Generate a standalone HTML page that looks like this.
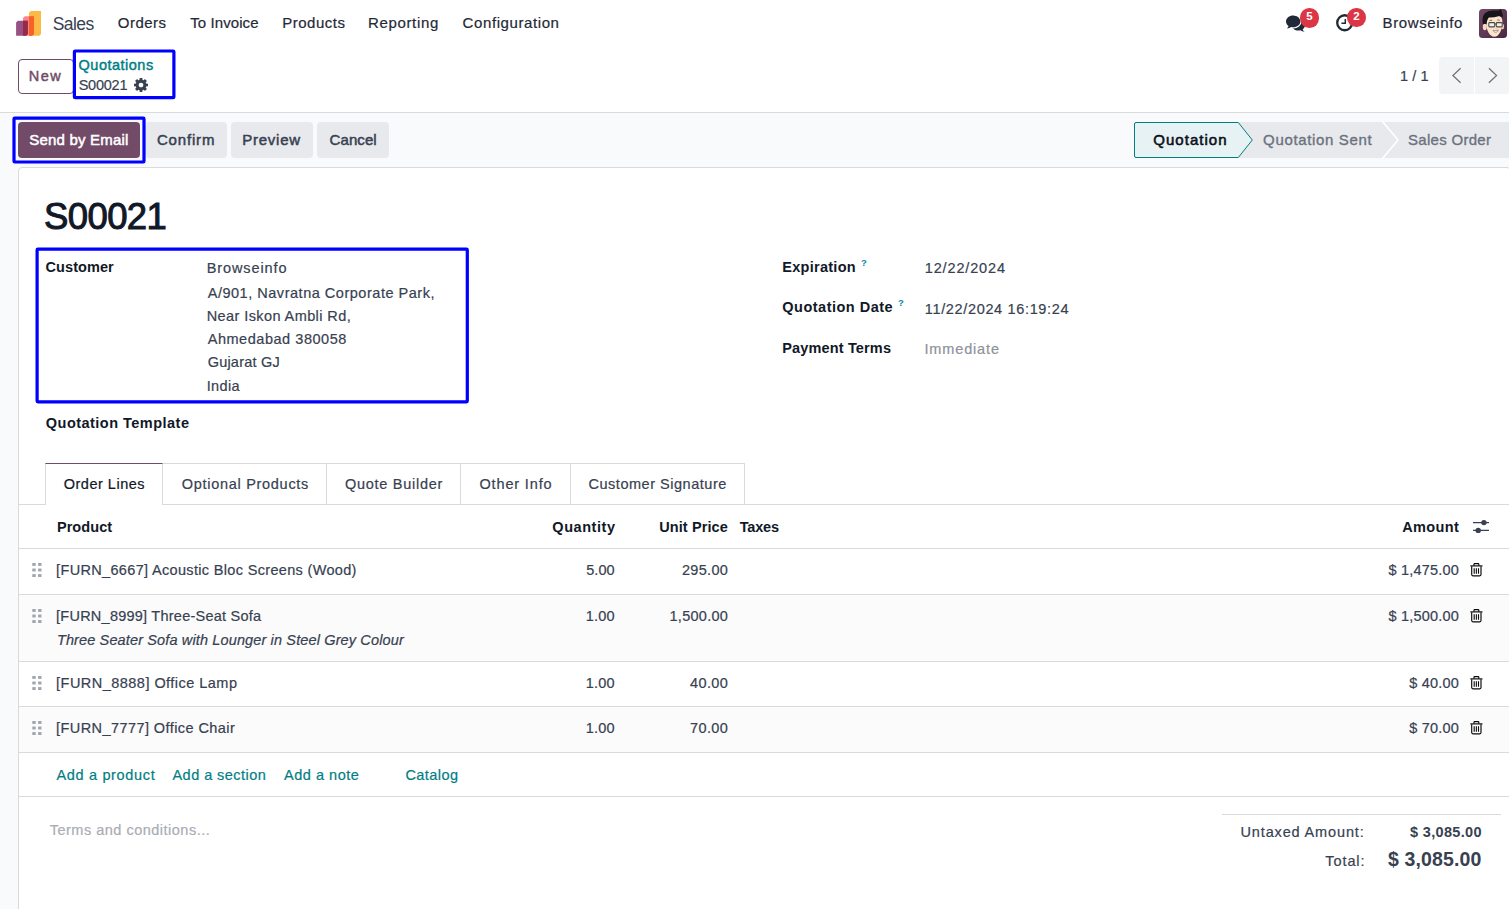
<!DOCTYPE html>
<html lang="en">
<head>
<meta charset="utf-8">
<title>Odoo - S00021</title>
<style>
*{box-sizing:border-box;margin:0;padding:0}
html,body{width:1509px;height:909px;overflow:hidden;background:#f9fafb}
body{font-family:"Liberation Sans","DejaVu Sans",sans-serif;font-size:14.5px;color:#374151;position:relative}
.a{position:absolute}
.t{position:absolute;white-space:nowrap}
#txt{position:absolute;left:0;top:0;width:0;height:0}
#top{position:absolute;left:0;top:0;width:1509px;height:113px;background:#fff;border-bottom:1px solid #d8dadd}
.btn{position:absolute;border-radius:4px}
.sec{background:#e7e9ed}
#sheet{position:absolute;left:18px;top:167px;width:1493px;height:760px;background:#fff;border:1px solid #d8dadd;border-radius:4px 4px 0 0}
.hline{position:absolute;height:1px;background:#d8dadd}
.vline{position:absolute;width:1px;background:#d8dadd}
.stripe{position:absolute;left:19px;width:1490px;background:#fbfbfb}

</style>
</head>
<body>
<div id="top"></div>
<!-- app logo -->
<svg class="a" style="left:16px;top:10px" width="26" height="26" viewBox="0 0 26 26">
  <path d="M14.8 0.9H25V24.0L23.2 25.8H13V2.7z" fill="#fbb945"/>
  <path d="M8.8 6.2H18V24.0L16.2 25.8H7V8.0z" fill="#fc868b"/>
  <path d="M13 6.200H18V24L16.200 25.800H13z" fill="#f86126"/>
  <path d="M1.9 10.8H11.9V24L10.1 25.8H0.1V12.6z" fill="#985184"/>
  <path d="M7 10.800H11.900V24L10.100 25.800H7z" fill="#962b48"/>
</svg>
<!-- systray: chat -->
<svg class="a" style="left:1285px;top:14px" width="22" height="19" viewBox="0 0 22 19">
  <path d="M13.400 6.400c3.700 0 6.600 2.200 6.600 5 0 1.500-.9 2.900-2.300 3.800.3 1 .9 1.800 1.900 2.600-1.700-.1-3.100-.600-4.200-1.500-.6.100-1.300.2-2 .2-3.600 0-6.600-2.300-6.600-5.100s3-5 6.600-5z" fill="#1f2937"/>
  <path d="M8.200 1.500c-4 0-7.200 2.700-7.200 6 0 1.800 1 3.500 2.600 4.600-.3 1-.9 1.800-1.800 2.500 1.700-.1 3.200-.700 4.400-1.500.6.100 1.300.2 2 .2 4 0 7.200-2.600 7.200-5.800s-3.200-6-7.200-6z" fill="#fff" stroke="#fff" stroke-width="2.400"/>
  <path d="M8.200 1.500c-4 0-7.200 2.700-7.200 6 0 1.800 1 3.500 2.600 4.600-.3 1-.9 1.800-1.800 2.500 1.700-.1 3.200-.700 4.400-1.500.6.100 1.300.2 2 .2 4 0 7.200-2.600 7.200-5.800s-3.200-6-7.200-6z" fill="#1f2937"/>
</svg>
<div class="a" style="left:1300px;top:8.200px;width:18.600px;height:19.400px;border-radius:50%;background:#dc3545"></div>
<!-- systray: clock -->
<svg class="a" style="left:1335px;top:13px" width="20" height="20" viewBox="0 0 20 20">
  <circle cx="9.700" cy="9.750" r="7.500" fill="none" stroke="#1f2937" stroke-width="2.300"/>
  <path d="M10.300 5.900v4.400H6.400" fill="none" stroke="#1f2937" stroke-width="1.500"/>
</svg>
<div class="a" style="left:1347.200px;top:8px;width:18.600px;height:19.400px;border-radius:50%;background:#dc3545"></div>
<!-- avatar -->
<svg class="a" style="left:1479px;top:9px" width="28" height="29" viewBox="0 0 28 29">
  <defs>
    <clipPath id="av"><rect x="0" y="0" width="28" height="29" rx="3.500"/></clipPath>
    <linearGradient id="avg" x1="0" y1="0" x2="1" y2="1"><stop offset="0" stop-color="#714a67"/><stop offset="1" stop-color="#4a2842"/></linearGradient>
  </defs>
  <g clip-path="url(#av)">
    <rect width="28" height="29" fill="url(#avg)"/>
    <ellipse cx="5.800" cy="18" rx="2" ry="3.300" fill="#f6d9c2"/>
    <ellipse cx="23.600" cy="17.500" rx="1.500" ry="2.800" fill="#eccbb0"/>
    <path d="M7 12C7 7 11 5.500 15.500 5.500S23.600 7.500 23.400 13c-.100 4-.700 7.500-2.400 10.500-1.500 2.700-3.300 4.300-5.700 4.300s-4.400-1.800-6-4.600C7.800 20.500 7 16.500 7 12z" fill="#fbe3cd"/>
    <path d="M4 15.300C2.800 9 4.200 4.500 8.500 2.800c3-1.300 7.500-1.300 11-1.100 1-.500 1.800-1.300 2.200-1.700.800 1 1.300 2.300 1.200 3.600 1 1.600 1.100 3.300.600 4.800-2-1-3.400-1.200-5-1-2.600.900-5.700 1.300-8.600 1.100C8.400 10 7.800 12.500 7.600 15.500 6.500 14.500 5 14.600 4 15.300z" fill="#161519"/>
    <path d="M10.600 11.600c.800-.500 1.700-.500 2.500-.200M18.300 11.200c.800-.400 1.700-.300 2.400.100" stroke="#3a2a26" stroke-width=".7" fill="none"/>
    <rect x="9.800" y="13.600" width="5.900" height="4.300" rx=".8" fill="#f4efe8" stroke="#4b4a47" stroke-width="1.100"/>
    <rect x="17.300" y="13.600" width="5.900" height="4.300" rx=".8" fill="#f4efe8" stroke="#4b4a47" stroke-width="1.100"/>
    <path d="M15.700 15h1.600" stroke="#4b4a47" stroke-width="1"/>
    <path d="M16.200 19.400c.500.300 1.100.300 1.600 0" stroke="#e5a99a" stroke-width=".7" fill="none"/>
    <path d="M14 21.100c1.700.600 3.700.600 5.400-.200-.300 1.500-1.400 2.300-2.700 2.300S14.300 22.500 14 21.100z" fill="#fff" stroke="#7a5148" stroke-width=".6"/>
  </g>
</svg>

<!-- control panel -->
<div class="btn" style="left:18px;top:58.5px;width:56px;height:35.500px;border:1px solid #714b67;background:#fff"></div>
<!-- gear -->
<svg class="a" style="left:133.500px;top:77.500px" width="14" height="14" viewBox="0 0 1536 1536">
  <path fill="#374151" d="M1024 768q0-106-75-181t-181-75-181 75-75 181 75 181 181 75 181-75 75-181zm512-109v222q0 12-8 23t-20 13l-185 28q-19 54-39 91 35 50 107 138 10 12 10 25t-9 23q-27 37-99 108t-94 71q-12 0-26-9l-138-108q-44 23-91 38-16 136-29 186-7 28-36 28H657q-14 0-24.500-8.500T621 1505l-28-184q-49-16-90-37l-141 107q-10 9-25 9-14 0-25-11-126-114-165-168-7-10-7-23 0-12 8-23 15-21 51-66.500t54-70.500q-27-50-41-99L29 912q-13-2-21-12.500T0 876V654q0-12 8-23t19-13l186-28q14-46 39-92-40-57-107-138-10-12-10-24 0-10 9-23 26-36 98.500-107.500T337 134q13 0 26 10l138 107q44-23 91-38 16-136 29-186 7-28 36-28h222q14 0 24.500 8.500T915 29l28 184q49 16 90 37l142-107q9-9 24-9 13 0 25 10 129 119 165 170 7 8 7 22 0 12-8 23-15 21-51 66.500t-54 70.500q26 50 41 98l183 28q13 2 21 12.500t8 23.500z"/>
</svg>
<!-- pager -->
<div class="a" style="left:1439px;top:57px;width:35px;height:37px;background:#f3f4f6;border-radius:4px 0 0 4px"></div>
<div class="a" style="left:1475px;top:57px;width:34.500px;height:37px;background:#f3f4f6;border-radius:0 4px 4px 0"></div>
<svg class="a" style="left:1450px;top:66px" width="52" height="20" viewBox="0 0 52 20">
  <path d="M10.600 2.200L2.900 9.500l7.700 7.300" fill="none" stroke="#707070" stroke-width="1.200"/>
  <path d="M38.900 2.200l7.700 7.300-7.700 7.300" fill="none" stroke="#707070" stroke-width="1.200"/>
</svg>

<!-- action buttons -->
<div class="btn" style="left:18px;top:122px;width:122.300px;height:36px;background:#714b67"></div>
<div class="btn sec" style="left:145px;top:122px;width:81.600px;height:36px"></div>
<div class="btn sec" style="left:231px;top:122px;width:82px;height:36px"></div>
<div class="btn sec" style="left:317px;top:122px;width:72px;height:36px"></div>

<!-- statusbar -->
<svg class="a" style="left:1130px;top:120px" width="379" height="40" viewBox="0 0 379 40">
  <path d="M108 2H379V38H108z" fill="#e7e9ed"/>
  <path d="M252.500 1.500L268 20 252.500 38.500" fill="none" stroke="#fff" stroke-width="1.600"/>
  <path d="M6 2.500H108.300L122.300 20 108.300 37.500H6a1.500 1.500 0 0 1-1.500-1.500V4A1.500 1.500 0 0 1 6 2.500z" fill="#e6f2f3" stroke="#017e84" stroke-width="1"/>
</svg>

<!-- sheet -->
<div id="sheet"></div>
<!-- tabs -->
<div class="hline" style="left:19px;top:504px;width:1490px"></div>
<div class="a" style="left:45px;top:463px;width:700px;height:42px;border:1px solid #d8dadd;border-bottom:none"></div>
<div class="a" style="left:45px;top:463px;width:118px;height:42px;background:#fff;border:1px solid #d8dadd;border-top:1px solid #714b67;border-bottom:none"></div>
<div class="vline" style="left:326px;top:464px;height:40px"></div>
<div class="vline" style="left:460px;top:464px;height:40px"></div>
<div class="vline" style="left:570px;top:464px;height:40px"></div>
<!-- table -->
<div class="stripe" style="top:595px;height:66px"></div>
<div class="stripe" style="top:707px;height:45px"></div>
<div class="hline" style="left:19px;top:548px;width:1490px"></div>
<div class="hline" style="left:19px;top:594px;width:1490px"></div>
<div class="hline" style="left:19px;top:661px;width:1490px"></div>
<div class="hline" style="left:19px;top:706px;width:1490px"></div>
<div class="hline" style="left:19px;top:752px;width:1490px"></div>
<div class="hline" style="left:19px;top:796px;width:1490px"></div>
<div class="hline" style="left:1222px;top:814px;width:279px"></div>
<!-- optional columns icon -->
<svg class="a" style="left:1472px;top:519px" width="18" height="15" viewBox="0 0 18 15">
  <path d="M1 3.600h16M1 11.400h16" stroke="#374151" stroke-width="1.200"/>
  <circle cx="11.900" cy="3.600" r="2.700" fill="#374151"/>
  <circle cx="6.200" cy="11.400" r="2.700" fill="#374151"/>
</svg>
<!-- symbols -->
<svg width="0" height="0" style="position:absolute">
  <defs>
    <g id="grip" fill="#9fa5af">
      <rect x=".3" y="0" width="3.400" height="2.900"/><rect x="6.100" y="0" width="3.400" height="2.900"/>
      <rect x=".3" y="5.550" width="3.400" height="2.900"/><rect x="6.100" y="5.550" width="3.400" height="2.900"/>
      <rect x=".3" y="11.100" width="3.400" height="2.900"/><rect x="6.100" y="11.100" width="3.400" height="2.900"/>
    </g>
    <g id="trash" fill="none" stroke="#0a0a0a" stroke-width="1.150">
      <path d="M.3 2.900h12.200"/>
      <path d="M4 2.700V1.200c0-.4.300-.6.600-.6h3.600c.4 0 .6.300.6.600v1.500"/>
      <path d="M1.700 3.200v8.400c0 .7.500 1.200 1.200 1.200h6.900c.7 0 1.200-.500 1.200-1.200V3.200"/>
      <path d="M4.200 5.200v5.600M6.350 5.200v5.600M8.500 5.200v5.600" stroke-width="1.100"/>
    </g>
  </defs>
</svg>
<svg class="a" style="left:32px;top:563px" width="10" height="15"><use href="#grip"/></svg>
<svg class="a" style="left:32px;top:609px" width="10" height="15"><use href="#grip"/></svg>
<svg class="a" style="left:32px;top:676px" width="10" height="15"><use href="#grip"/></svg>
<svg class="a" style="left:32px;top:721px" width="10" height="15"><use href="#grip"/></svg>
<svg class="a" style="left:1470px;top:563px" width="14" height="14"><use href="#trash"/></svg>
<svg class="a" style="left:1470px;top:609px" width="14" height="14"><use href="#trash"/></svg>
<svg class="a" style="left:1470px;top:676px" width="14" height="14"><use href="#trash"/></svg>
<svg class="a" style="left:1470px;top:720.600px" width="14" height="14"><use href="#trash"/></svg>

<!-- blue highlight boxes -->
<svg class="a" style="left:0;top:0;pointer-events:none" width="1509" height="909" viewBox="0 0 1509 909">
  <g fill="none" stroke="#0000ff" stroke-width="3.200">
    <rect x="74.400" y="51" width="99.500" height="46.700" rx=".8"/>
    <rect x="14" y="118.200" width="130" height="43.800" rx=".8"/>
    <rect x="37.100" y="249.100" width="430.200" height="152.700" rx=".8"/>
  </g>
</svg>

<div id="txt">
<span class="t" style="left:52.70px;top:12.00px;font-size:17.5px;line-height:24px;color:#374151;letter-spacing:-0.581px;">Sales</span>
<span class="t" style="left:117.80px;top:12.00px;font-size:15px;line-height:21px;color:#1f2937;letter-spacing:0.472px;-webkit-text-stroke:0.2px #1f2937;">Orders</span>
<span class="t" style="left:190.20px;top:12.00px;font-size:15px;line-height:21px;color:#1f2937;letter-spacing:0.090px;-webkit-text-stroke:0.2px #1f2937;">To Invoice</span>
<span class="t" style="left:282.30px;top:12.00px;font-size:15px;line-height:21px;color:#1f2937;letter-spacing:0.487px;-webkit-text-stroke:0.2px #1f2937;">Products</span>
<span class="t" style="left:368.00px;top:12.00px;font-size:15px;line-height:21px;color:#1f2937;letter-spacing:0.650px;-webkit-text-stroke:0.2px #1f2937;">Reporting</span>
<span class="t" style="left:462.60px;top:12.00px;font-size:15px;line-height:21px;color:#1f2937;letter-spacing:0.593px;-webkit-text-stroke:0.2px #1f2937;">Configuration</span>
<span class="t" style="left:1382.60px;top:12.00px;font-size:15px;line-height:21px;color:#1f2937;letter-spacing:0.605px;-webkit-text-stroke:0.2px #1f2937;">Browseinfo</span>
<span class="t" style="left:1306.20px;top:8.00px;font-size:11.5px;line-height:16px;color:#fff;font-weight:700;">5</span>
<span class="t" style="left:1353.30px;top:8.00px;font-size:11.5px;line-height:16px;color:#fff;font-weight:700;">2</span>
<span class="t" style="left:28.77px;top:66.00px;font-size:14.5px;line-height:20px;color:#714b67;letter-spacing:1.482px;-webkit-text-stroke:0.45px #714b67;">New</span>
<span class="t" style="left:78.58px;top:55.00px;font-size:14.5px;line-height:20px;color:#017e84;letter-spacing:0.491px;-webkit-text-stroke:0.45px #017e84;">Quotations</span>
<span class="t" style="left:78.70px;top:75.00px;font-size:14.5px;line-height:20px;color:#374151;letter-spacing:-0.246px;-webkit-text-stroke:0.2px #374151;">S00021</span>
<span class="t" style="left:1399.90px;top:66.00px;font-size:14.5px;line-height:20px;color:#374151;letter-spacing:0.113px;-webkit-text-stroke:0.2px #374151;">1 / 1</span>
<span class="t" style="left:29.35px;top:129.00px;font-size:15px;line-height:21px;color:#fff;letter-spacing:0.185px;-webkit-text-stroke:0.5px #fff;">Send by Email</span>
<span class="t" style="left:156.95px;top:129.00px;font-size:15px;line-height:21px;color:#374151;letter-spacing:0.831px;-webkit-text-stroke:0.5px #374151;">Confirm</span>
<span class="t" style="left:242.15px;top:129.00px;font-size:15px;line-height:21px;color:#374151;letter-spacing:0.780px;-webkit-text-stroke:0.5px #374151;">Preview</span>
<span class="t" style="left:329.55px;top:129.00px;font-size:15px;line-height:21px;color:#374151;letter-spacing:0.088px;-webkit-text-stroke:0.5px #374151;">Cancel</span>
<span class="t" style="left:1153.22px;top:129.00px;font-size:15px;line-height:21px;color:#0b0f19;letter-spacing:1.037px;-webkit-text-stroke:0.55px #0b0f19;">Quotation</span>
<span class="t" style="left:1263.12px;top:129.00px;font-size:15px;line-height:21px;color:#6b7280;letter-spacing:0.646px;-webkit-text-stroke:0.35px #6b7280;">Quotation Sent</span>
<span class="t" style="left:1408.03px;top:129.00px;font-size:15px;line-height:21px;color:#6b7280;letter-spacing:0.296px;-webkit-text-stroke:0.35px #6b7280;">Sales Order</span>
<span class="t" style="left:44.10px;top:191.00px;font-size:36.5px;line-height:51px;color:#111827;letter-spacing:-0.629px;-webkit-text-stroke:1.0px #111827;">S00021</span>
<span class="t" style="left:45.60px;top:257.00px;font-size:14.5px;line-height:20px;color:#111827;font-weight:700;letter-spacing:0.052px;">Customer</span>
<span class="t" style="left:206.70px;top:258.00px;font-size:14.5px;line-height:20px;color:#374151;letter-spacing:0.904px;-webkit-text-stroke:0.2px #374151;">Browseinfo</span>
<span class="t" style="left:207.70px;top:283.00px;font-size:14.5px;line-height:20px;color:#374151;letter-spacing:0.522px;-webkit-text-stroke:0.2px #374151;">A/901, Navratna Corporate Park,</span>
<span class="t" style="left:206.70px;top:306.00px;font-size:14.5px;line-height:20px;color:#374151;letter-spacing:0.412px;-webkit-text-stroke:0.2px #374151;">Near Iskon Ambli Rd,</span>
<span class="t" style="left:207.70px;top:329.00px;font-size:14.5px;line-height:20px;color:#374151;letter-spacing:0.537px;-webkit-text-stroke:0.2px #374151;">Ahmedabad 380058</span>
<span class="t" style="left:207.70px;top:352.00px;font-size:14.5px;line-height:20px;color:#374151;letter-spacing:0.205px;-webkit-text-stroke:0.2px #374151;">Gujarat GJ</span>
<span class="t" style="left:206.70px;top:376.00px;font-size:14.5px;line-height:20px;color:#374151;letter-spacing:0.355px;-webkit-text-stroke:0.2px #374151;">India</span>
<span class="t" style="left:45.80px;top:413.00px;font-size:14.5px;line-height:20px;color:#111827;font-weight:700;letter-spacing:0.476px;">Quotation Template</span>
<span class="t" style="left:782.30px;top:257.00px;font-size:14.5px;line-height:20px;color:#111827;font-weight:700;letter-spacing:0.273px;">Expiration</span>
<span class="t" style="left:860.90px;top:256.00px;font-size:9.5px;line-height:13px;color:#0a86a8;font-weight:700;">?</span>
<span class="t" style="left:924.80px;top:258.00px;font-size:14.5px;line-height:20px;color:#374151;letter-spacing:0.844px;-webkit-text-stroke:0.2px #374151;">12/22/2024</span>
<span class="t" style="left:782.30px;top:297.00px;font-size:14.5px;line-height:20px;color:#111827;font-weight:700;letter-spacing:0.496px;">Quotation Date</span>
<span class="t" style="left:898.10px;top:296.00px;font-size:9.5px;line-height:13px;color:#0a86a8;font-weight:700;">?</span>
<span class="t" style="left:924.80px;top:299.00px;font-size:14.5px;line-height:20px;color:#374151;letter-spacing:0.655px;-webkit-text-stroke:0.2px #374151;">11/22/2024 16:19:24</span>
<span class="t" style="left:782.30px;top:338.00px;font-size:14.5px;line-height:20px;color:#111827;font-weight:700;letter-spacing:0.146px;">Payment Terms</span>
<span class="t" style="left:924.50px;top:339.00px;font-size:14.5px;line-height:20px;color:#8d929b;letter-spacing:0.846px;-webkit-text-stroke:0.2px #8d929b;">Immediate</span>
<span class="t" style="left:63.70px;top:474.00px;font-size:14.5px;line-height:20px;color:#111827;letter-spacing:0.509px;-webkit-text-stroke:0.2px #111827;">Order Lines</span>
<span class="t" style="left:181.70px;top:474.00px;font-size:14.5px;line-height:20px;color:#374151;letter-spacing:0.712px;-webkit-text-stroke:0.2px #374151;">Optional Products</span>
<span class="t" style="left:344.90px;top:474.00px;font-size:14.5px;line-height:20px;color:#374151;letter-spacing:0.730px;-webkit-text-stroke:0.2px #374151;">Quote Builder</span>
<span class="t" style="left:479.50px;top:474.00px;font-size:14.5px;line-height:20px;color:#374151;letter-spacing:0.843px;-webkit-text-stroke:0.2px #374151;">Other Info</span>
<span class="t" style="left:588.50px;top:474.00px;font-size:14.5px;line-height:20px;color:#374151;letter-spacing:0.524px;-webkit-text-stroke:0.2px #374151;">Customer Signature</span>
<span class="t" style="left:56.90px;top:517.00px;font-size:14.5px;line-height:20px;color:#111827;font-weight:700;letter-spacing:0.075px;">Product</span>
<span class="t" style="left:552.30px;top:517.00px;font-size:14.5px;line-height:20px;color:#111827;font-weight:700;letter-spacing:0.551px;">Quantity</span>
<span class="t" style="left:659.20px;top:517.00px;font-size:14.5px;line-height:20px;color:#111827;font-weight:700;letter-spacing:0.109px;">Unit Price</span>
<span class="t" style="left:739.70px;top:517.00px;font-size:14.5px;line-height:20px;color:#111827;font-weight:700;letter-spacing:-0.193px;">Taxes</span>
<span class="t" style="left:1402.20px;top:517.00px;font-size:14.5px;line-height:20px;color:#111827;font-weight:700;letter-spacing:0.393px;">Amount</span>
<span class="t" style="left:56.10px;top:560.00px;font-size:14.5px;line-height:20px;color:#374151;letter-spacing:0.331px;-webkit-text-stroke:0.2px #374151;">[FURN_6667] Acoustic Bloc Screens (Wood)</span>
<span class="t" style="left:586.20px;top:560.00px;font-size:14.5px;line-height:20px;color:#374151;letter-spacing:0.048px;-webkit-text-stroke:0.2px #374151;">5.00</span>
<span class="t" style="left:682.00px;top:560.00px;font-size:14.5px;line-height:20px;color:#374151;letter-spacing:0.303px;-webkit-text-stroke:0.2px #374151;">295.00</span>
<span class="t" style="left:1388.50px;top:560.00px;font-size:14.5px;line-height:20px;color:#374151;letter-spacing:0.203px;-webkit-text-stroke:0.2px #374151;">$ 1,475.00</span>
<span class="t" style="left:56.10px;top:606.00px;font-size:14.5px;line-height:20px;color:#374151;letter-spacing:0.238px;-webkit-text-stroke:0.2px #374151;">[FURN_8999] Three-Seat Sofa</span>
<span class="t" style="left:585.80px;top:606.00px;font-size:14.5px;line-height:20px;color:#374151;letter-spacing:0.181px;-webkit-text-stroke:0.2px #374151;">1.00</span>
<span class="t" style="left:669.50px;top:606.00px;font-size:14.5px;line-height:20px;color:#374151;letter-spacing:0.275px;-webkit-text-stroke:0.2px #374151;">1,500.00</span>
<span class="t" style="left:1388.50px;top:606.00px;font-size:14.5px;line-height:20px;color:#374151;letter-spacing:0.203px;-webkit-text-stroke:0.2px #374151;">$ 1,500.00</span>
<span class="t" style="left:56.10px;top:673.00px;font-size:14.5px;line-height:20px;color:#374151;letter-spacing:0.467px;-webkit-text-stroke:0.2px #374151;">[FURN_8888] Office Lamp</span>
<span class="t" style="left:585.80px;top:673.00px;font-size:14.5px;line-height:20px;color:#374151;letter-spacing:0.181px;-webkit-text-stroke:0.2px #374151;">1.00</span>
<span class="t" style="left:690.10px;top:673.00px;font-size:14.5px;line-height:20px;color:#374151;letter-spacing:0.370px;-webkit-text-stroke:0.2px #374151;">40.00</span>
<span class="t" style="left:1409.20px;top:673.00px;font-size:14.5px;line-height:20px;color:#374151;letter-spacing:0.214px;-webkit-text-stroke:0.2px #374151;">$ 40.00</span>
<span class="t" style="left:56.10px;top:718.00px;font-size:14.5px;line-height:20px;color:#374151;letter-spacing:0.420px;-webkit-text-stroke:0.2px #374151;">[FURN_7777] Office Chair</span>
<span class="t" style="left:585.80px;top:718.00px;font-size:14.5px;line-height:20px;color:#374151;letter-spacing:0.181px;-webkit-text-stroke:0.2px #374151;">1.00</span>
<span class="t" style="left:690.10px;top:718.00px;font-size:14.5px;line-height:20px;color:#374151;letter-spacing:0.370px;-webkit-text-stroke:0.2px #374151;">70.00</span>
<span class="t" style="left:1409.20px;top:718.00px;font-size:14.5px;line-height:20px;color:#374151;letter-spacing:0.214px;-webkit-text-stroke:0.2px #374151;">$ 70.00</span>
<span class="t" style="left:56.90px;top:630.00px;font-size:14.5px;line-height:20px;color:#374151;font-style:italic;letter-spacing:0.134px;-webkit-text-stroke:0.2px #374151;">Three Seater Sofa with Lounger in Steel Grey Colour</span>
<span class="t" style="left:56.50px;top:765.00px;font-size:14.5px;line-height:20px;color:#017e84;letter-spacing:0.662px;-webkit-text-stroke:0.2px #017e84;">Add a product</span>
<span class="t" style="left:172.50px;top:765.00px;font-size:14.5px;line-height:20px;color:#017e84;letter-spacing:0.450px;-webkit-text-stroke:0.2px #017e84;">Add a section</span>
<span class="t" style="left:284.10px;top:765.00px;font-size:14.5px;line-height:20px;color:#017e84;letter-spacing:0.514px;-webkit-text-stroke:0.2px #017e84;">Add a note</span>
<span class="t" style="left:405.40px;top:765.00px;font-size:14.5px;line-height:20px;color:#017e84;letter-spacing:0.431px;-webkit-text-stroke:0.2px #017e84;">Catalog</span>
<span class="t" style="left:49.70px;top:820.00px;font-size:14.5px;line-height:20px;color:#a9adb4;letter-spacing:0.497px;-webkit-text-stroke:0.2px #a9adb4;">Terms and conditions...</span>
<span class="t" style="left:1240.50px;top:822.00px;font-size:14.5px;line-height:20px;color:#374151;letter-spacing:0.857px;-webkit-text-stroke:0.2px #374151;">Untaxed Amount:</span>
<span class="t" style="left:1410.10px;top:822.00px;font-size:14.5px;line-height:20px;color:#374151;font-weight:700;letter-spacing:0.325px;">$ 3,085.00</span>
<span class="t" style="left:1325.30px;top:851.00px;font-size:14.5px;line-height:20px;color:#374151;letter-spacing:0.914px;-webkit-text-stroke:0.2px #374151;">Total:</span>
<span class="t" style="left:1388.10px;top:846.00px;font-size:19.5px;line-height:27px;color:#374151;font-weight:700;letter-spacing:0.120px;">$ 3,085.00</span>
</div>
</body>
</html>
